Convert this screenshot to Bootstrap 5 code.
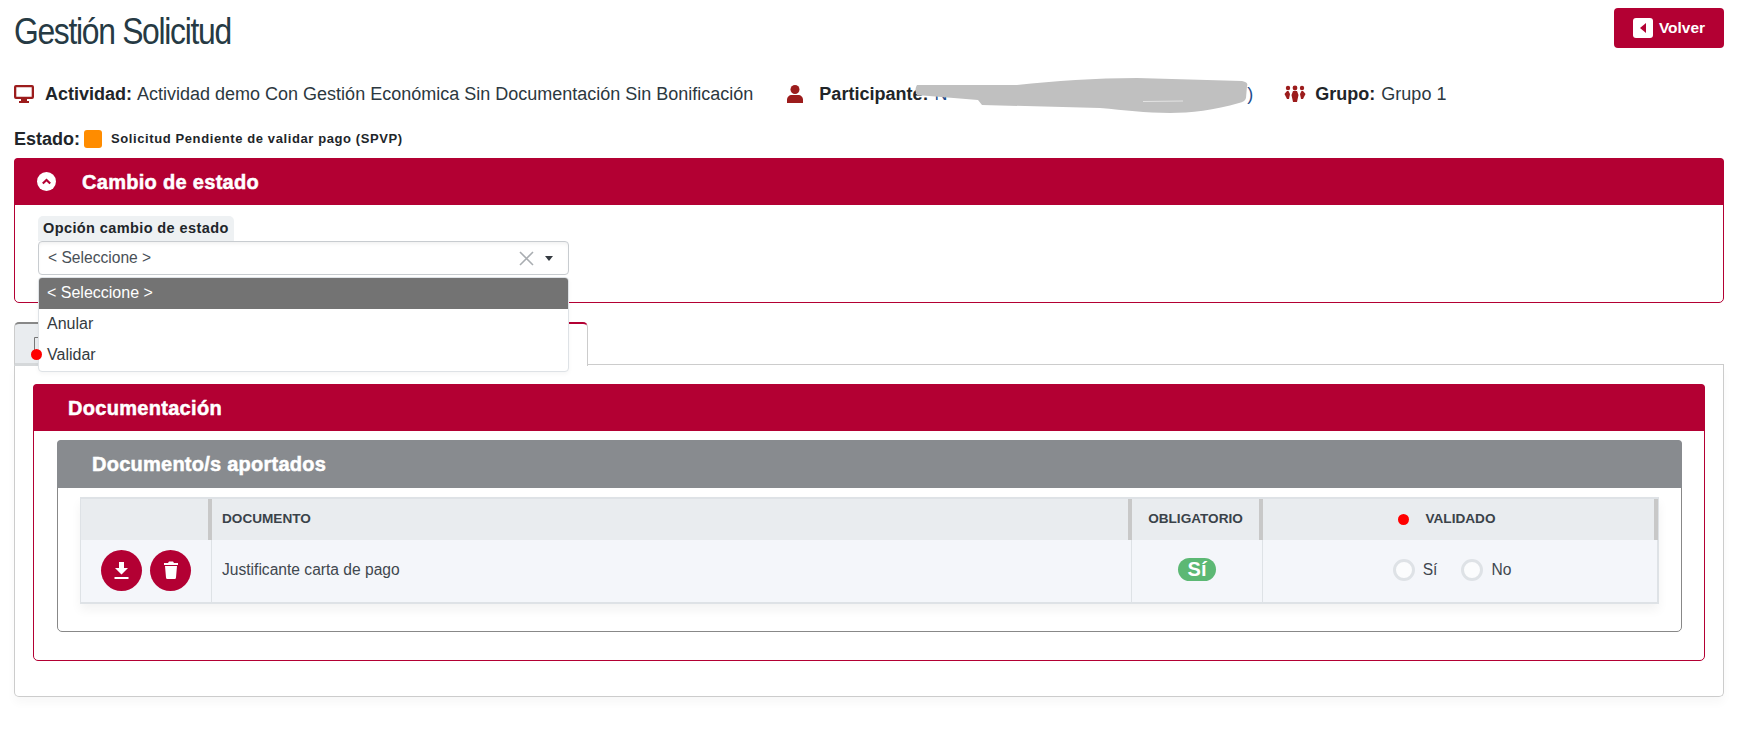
<!DOCTYPE html>
<html lang="es">
<head>
<meta charset="utf-8">
<title>Gestión Solicitud</title>
<link href="https://cdn.jsdelivr.net/npm/bootstrap@5.3.0/dist/css/bootstrap.min.css" rel="stylesheet">
<style>
:root{--gs-red:#b30033;}
html,body{height:738px;overflow:hidden;background:#fff;}
body{font-family:"Liberation Sans",Arial,sans-serif;color:#212529;font-size:16px;}
.gs-page{padding:8px 21px 0 14px;position:relative;height:738px;}
.gs-head{height:40px;}
.gs-title{font-size:37px;line-height:40px;margin:0;color:#263a44;font-weight:400;letter-spacing:-1.5px;padding-top:4px;transform:scaleX(.86);transform-origin:left center;}
.gs-back{background:var(--gs-red);color:#fff;font-weight:700;font-size:15.5px;height:40px;width:110px;border:0;border-radius:4px;gap:6px;padding:0;}
.gs-back:hover{background:var(--gs-red);color:#fff;}
.gs-info{margin-top:28px;height:36px;font-size:18px;color:#2c3840;gap:34px;white-space:nowrap;}
.gs-info b{font-weight:700;color:#212529;margin-right:1px;}
.gs-info svg{display:block;flex:none;}
.gs-item{gap:11px;}
.gs-item-p{gap:16px;}
.gs-item-g{gap:9px;}
.gs-pname{width:431px;gap:5px;}
.gs-pname-end{margin-right:-3px;}
.gs-state{height:26px;margin-top:14px;font-size:18px;margin-bottom:6px;}
.gs-state b{font-weight:700;}
.gs-sq{width:18px;height:18px;background:#ff8c00;border-radius:3px;margin:0 9px 0 4px;}
.gs-state small{font-size:13px;font-weight:700;letter-spacing:.6px;}
.gs-panel{border:1px solid var(--gs-red);border-radius:5px;}
.gs-phead{background:var(--gs-red);color:#fff;font-weight:700;font-size:20px;-webkit-text-stroke:.5px #fff;border-radius:4px 4px 0 0;height:47px;margin:-1px -1px 0;letter-spacing:.3px;}
.gs-change{height:145px;}
.gs-change .gs-phead{padding-left:23px;gap:26px;}
.gs-field{margin:11px 0 0 23px;width:531px;position:relative;}
.gs-label{display:block;width:196px;background:#eef1f3;font-size:14.5px;font-weight:700;height:25px;line-height:24px;padding:0 5px;border-radius:5px 5px 0 0;letter-spacing:.4px;}
.gs-select{height:34px;border:1px solid #c8ccd0;border-radius:4px;padding:0 15px 0 9px;color:#495057;font-size:15.6px;box-shadow:inset 0 3px 4px -2px rgba(0,0,0,.08);}
.gs-caret{width:0;height:0;border-left:4px solid transparent;border-right:4px solid transparent;border-top:5px solid #343a40;margin-left:11px;}
.gs-menu{position:absolute;left:0;right:0;top:61px;border:1px solid #dee2e6;border-radius:4px;background:#fff;z-index:5;overflow:hidden;font-size:16px;box-shadow:0 2px 4px rgba(0,0,0,.04);}
.gs-opt{height:31px;line-height:29px;padding-left:8px;color:#343a40;}
.gs-opt.gs-on{background:#737373;color:#fff;}
.gs-tabs{margin-top:19px;height:43px;position:relative;z-index:1;}
.gs-tab{height:44px;border-radius:5px 5px 0 0;}
.gs-tab-off{width:220px;background:#e9ecef;border:1px solid #ccc;border-top:2px solid #888;border-bottom:3px solid #d5d8da;padding:13px 0 0 19px;}
.gs-tab-off svg{display:block;}
.gs-tab-on{width:354px;background:#fff;border:1px solid #ccc;border-top:2px solid var(--gs-red);border-bottom:0;}
.gs-tabline{flex:1;border-bottom:1px solid #ccc;}
.gs-content{border:1px solid #ccc;border-top:0;border-radius:0 0 5px 5px;height:332px;padding:19px 18px 0 18px;box-shadow:0 6px 10px rgba(0,0,0,.03);}
.gs-doc{height:277px;}
.gs-doc>.gs-phead{padding-left:35px;}
.gs-inner{border:1px solid #888;border-radius:5px;margin:9px 22px 0 23px;height:192px;}
.gs-ihead{background:#888b8f;color:#fff;font-weight:700;font-size:20px;-webkit-text-stroke:.5px #fff;height:48px;margin:-1px -1px 0;border-radius:4px 4px 0 0;padding-left:35px;letter-spacing:.25px;}
.gs-tablewrap{margin:9px 22px 0 22px;box-shadow:0 6px 10px rgba(0,0,0,.05);}
.gs-table{margin:0;width:100%;table-layout:fixed;border-collapse:separate;border-spacing:0;border:1px solid #dee2e6;border-bottom:2px solid #dee2e6;border-top:2px solid #dee2e6;}
.gs-c1{width:131px;}.gs-c2{width:920px;}.gs-c3{width:131px;}
.gs-table th{background:#e9ecef;height:41px;font-size:13.6px;font-weight:700;color:#3a4249;vertical-align:middle;padding:0 0 0 10px;border-right:4px solid #c8c8c8;border-bottom:0;box-shadow:none;}
.gs-table th.gs-vh{padding-left:4px;}
.gs-table td{background:#f4f6fa;height:62px;vertical-align:middle;padding:0 0 2px 10px;font-size:15.6px;color:#3f474e;border-right:1px solid #dee2e6;border-bottom:0;box-shadow:none;}
.gs-round{width:41px;height:41px;border-radius:50%;background:var(--gs-red);border:0;padding:0;}
.gs-yes{background:#5cb874;color:#fff;font-weight:700;font-size:20px;line-height:23px;height:23px;width:38px;border-radius:12px;display:inline-block;text-align:center;}
.gs-radio{width:22px;height:22px;border-radius:50%;border:3px solid #dee2e6;background:#fbfcfd;display:inline-block;}
.gs-choice{padding-right:16px;}
.gs-dot{position:absolute;width:11px;height:11px;border-radius:50%;background:#f00;z-index:9;}
.gs-dot-a{left:31px;top:349px;}
.gs-dot-b{left:1398px;top:514px;}
.gs-smudge{position:absolute;left:915px;top:76px;z-index:6;}
.gs-blue{color:#1f4e8c;}
</style>
</head>
<body>
<div class="gs-page">
  <div class="d-flex justify-content-between align-items-start gs-head">
    <h1 class="gs-title">Gestión Solicitud</h1>
    <button type="button" class="btn gs-back d-flex align-items-center justify-content-center">
      <svg width="20" height="20" viewBox="0 0 20 20"><rect width="20" height="20" rx="3" fill="#fff"/><path d="M13 5v10L7 10z" fill="#b30033"/></svg>Volver
    </button>
  </div>

  <div class="d-flex align-items-center gs-info">
    <div class="d-flex align-items-center gs-item">
      <svg width="20" height="18" viewBox="0 0 20 18"><path d="M2 0h16a2 2 0 0 1 2 2v10a2 2 0 0 1-2 2h-5v2h2v2H5v-2h2v-2H2a2 2 0 0 1-2-2V2a2 2 0 0 1 2-2zm.300 2.300v9.400h15.400V2.300z" fill="#9c1c1c"/></svg>
      <span><b>Actividad:</b> Actividad demo Con Gestión Económica Sin Documentación Sin Bonificación</span>
    </div>
    <div class="d-flex align-items-center gs-item-p">
      <svg width="16" height="18" viewBox="0 0 16 18"><circle cx="8" cy="4.500" r="4.500" fill="#9c1c1c"/><path d="M0 18v-3c0-3 2-5 5-5h6c3 0 5 2 5 5v3z" fill="#9c1c1c"/></svg>
      <span class="d-flex justify-content-between gs-pname"><b>Participante:</b><span class="gs-blue flex-grow-1 d-flex justify-content-between"><span>N</span><span class="gs-pname-end">)</span></span></span>
    </div>
    <div class="d-flex align-items-center gs-item-g">
      <svg width="22" height="18" viewBox="0 0 22 18" fill="#9c1c1c"><circle cx="4" cy="3" r="2.200"/><circle cx="11" cy="3" r="2.400"/><circle cx="18" cy="3" r="2.200"/><path d="M3 6h1.500l1.500 3-1 5H3L0.500 9z"/><path d="M19 6h-1.500L16 9l1 5h2l2.500-5z"/><path d="M9 6h4l1.500 4-1.500 7H9l-1.500-7z"/></svg>
      <span><b>Grupo:</b> Grupo 1</span>
    </div>
  </div>

  <div class="d-flex align-items-center gs-state">
    <b>Estado:</b><span class="gs-sq"></span><small>Solicitud Pendiente de validar pago (SPVP)</small>
  </div>

  <div class="gs-panel gs-change">
    <div class="gs-phead d-flex align-items-center">
      <svg width="19" height="19" viewBox="0 0 18 18"><circle cx="9" cy="9" r="9" fill="#fff"/><path d="M5.500 11 9 7.500l3.500 3.500" fill="none" stroke="#b30033" stroke-width="2"/></svg>
      <span>Cambio de estado</span>
    </div>
    <div class="gs-field">
      <label class="gs-label">Opción cambio de estado</label>
      <div class="gs-select d-flex align-items-center justify-content-between">
        <span>&lt; Seleccione &gt;</span>
        <span class="d-flex align-items-center">
          <svg width="15" height="15" viewBox="0 0 15 15"><path d="M1 1l13 13M14 1 1 14" stroke="#a9adb1" stroke-width="1.600" fill="none"/></svg>
          <span class="gs-caret"></span>
        </span>
      </div>
      <div class="gs-menu">
        <div class="gs-opt gs-on">&lt; Seleccione &gt;</div>
        <div class="gs-opt">Anular</div>
        <div class="gs-opt">Validar</div>
      </div>
    </div>
  </div>

  <div class="d-flex gs-tabs">
    <div class="gs-tab gs-tab-off"><svg width="10" height="18" viewBox="0 0 10 18"><path d="M.500 18V.500H10" fill="none" stroke="#777" stroke-width="1"/></svg></div>
    <div class="gs-tab gs-tab-on"></div>
    <div class="gs-tabline"></div>
  </div>
  <div class="gs-content">
    <div class="gs-panel gs-doc">
      <div class="gs-phead d-flex align-items-center"><span>Documentación</span></div>
      <div class="gs-inner">
        <div class="gs-ihead d-flex align-items-center"><span>Documento/s aportados</span></div>
        <div class="gs-tablewrap">
          <table class="table gs-table">
            <colgroup><col class="gs-c1"><col class="gs-c2"><col class="gs-c3"><col></colgroup>
            <thead>
              <tr><th></th><th>DOCUMENTO</th><th class="text-center ps-0">OBLIGATORIO</th><th class="text-center gs-vh">VALIDADO</th></tr>
            </thead>
            <tbody>
              <tr>
                <td class="ps-0">
                  <div class="d-flex justify-content-center gap-2">
                    <button type="button" class="gs-round d-flex align-items-center justify-content-center" aria-label="Descargar"><svg width="15" height="17" viewBox="0 0 15 17" fill="#fff"><path d="M5 0h5v6h4L7.500 12.500 1 6h4z"/><rect x="0.500" y="15" width="14" height="2"/></svg></button>
                    <button type="button" class="gs-round d-flex align-items-center justify-content-center" aria-label="Eliminar"><svg width="14" height="18" viewBox="0 0 14 18" fill="#fff"><path d="M0 2h4l1-1.500h4L10 2h4v2H0zM1 5h12l-1 11.500a1.500 1.500 0 0 1-1.500 1.500h-7A1.500 1.500 0 0 1 2 16.500z"/></svg></button>
                  </div>
                </td>
                <td>Justificante carta de pago</td>
                <td class="text-center ps-0"><span class="gs-yes">Sí</span></td>
                <td class="ps-0">
                  <div class="d-flex align-items-center justify-content-center gs-choice">
                    <span class="gs-radio"></span><span class="ms-2">Sí</span>
                    <span class="gs-radio ms-4"></span><span class="ms-2">No</span>
                  </div>
                </td>
              </tr>
            </tbody>
          </table>
        </div>
      </div>
    </div>
  </div>

  <span class="gs-dot gs-dot-a"></span>
  <span class="gs-dot gs-dot-b"></span>
  <svg class="gs-smudge" width="340" height="40" viewBox="0 0 340 40"><path d="M2 9 102 9C140 5 180 2 222 2L327 5C332 6 333 8 332 10L331 22C330 25 328 26 324 27 300 34 275 37 255 37 230 37 210 34 185 32L67 29 63 24 2 19C0 16 0 12 2 9z" fill="#c0c0c0"/><path d="M228 25.500 268 25" stroke="#e4e4e4" stroke-width="1"/></svg>
</div>
</body>
</html>
